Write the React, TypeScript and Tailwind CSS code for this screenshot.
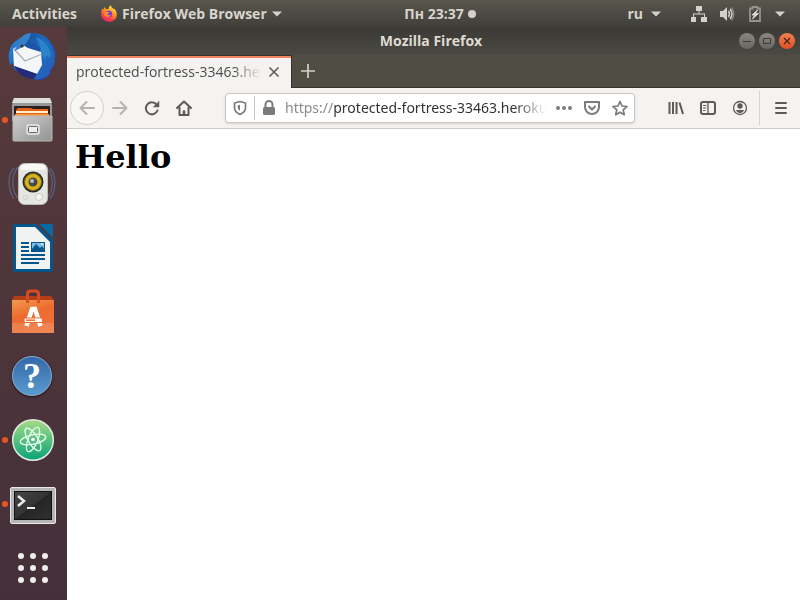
import type { ReactNode } from "react";

function Caret({ className = "" }: { className?: string }) {
  return (
    <svg className={className} width="10" height="6" viewBox="0 0 10 6" fill="#d3d1ca" aria-hidden="true">
      <path d="M0 0.5h10L5 5.5z" />
    </svg>
  );
}

function FirefoxLogo() {
  return (
    <svg width="16" height="17" viewBox="0 0 16 17" aria-hidden="true">
      <defs>
        <linearGradient id="fx" x1="0.8" y1="0" x2="0.3" y2="1">
          <stop offset="0" stopColor="#fff04a" />
          <stop offset="0.4" stopColor="#ff9a26" />
          <stop offset="0.75" stopColor="#ff4140" />
          <stop offset="1" stopColor="#e5207c" />
        </linearGradient>
      </defs>
      <path
        d="M1.3 3.4 2.6 4.6 3.6 2.1 5.2 4.2 7.4 4.1C7.5 2.2 8.7.8 9.8.3c.2 1.9 2 2.6 3.1 4.1l.2-1c2 2 2.7 4.1 2.7 6 0 4.2-3.4 7.3-7.8 7.3S.2 13.5.2 9.2C.2 7 .6 5 1.3 3.4z"
        fill="url(#fx)"
      />
      <circle cx="7.9" cy="9" r="3.3" fill="#7a3bd8" />
      <path d="M3 6.4c1.5-.6 2.5-.1 3.6.5l2 .2c-.3 1.1-1.5 1.2-2 1.6.2 1.5 2.2 2 3.6.9-1 3.4-6.6 3.1-7.4-.8z" fill="#ff8a2a" />
    </svg>
  );
}

function Thunderbird() {
  return (
    <svg width="48" height="48" viewBox="0 0 48 48" aria-hidden="true">
      <defs>
        <linearGradient id="tb" x1="0" y1="0" x2="1" y2="1">
          <stop offset="0" stopColor="#2a8fdc" />
          <stop offset="0.5" stopColor="#1c60ba" />
          <stop offset="1" stopColor="#2b37a0" />
        </linearGradient>
        <linearGradient id="tw" x1="0" y1="0" x2="1" y2="1">
          <stop offset="0" stopColor="#1b4796" />
          <stop offset="0.5" stopColor="#1d6fc0" />
          <stop offset="1" stopColor="#2858b8" />
        </linearGradient>
      </defs>
      <path d="M9 8C1 13-1 24 2 33l3-2 1 6 4 3V37l20 5-4 6c9 1 14-2 17-7l-2-1c4-3 6-8 6-13l-1 2c4-8 0-16-7-23C31 0 20-1 14 5z" fill="url(#tb)" />
      <path d="M13 13c7-4 15-4 20 3 3 8 1 18-5 27l-2 4c11 1 15-4 17-8l-2 1c5-5 7-11 5-19C44 10 34 2 24 1c-6 0-9 3-11 6z" fill="url(#tw)" />
      <path d="M5 17 13 12 33 19 34 33 29 42 6 34z" fill="#f5f6f8" />
      <path d="m6 17 11 12 17-7" stroke="#a9aeb9" strokeWidth="1.3" fill="none" />
      <path d="M13 12c9-4 17-2 20 8L20 16z" fill="#1b55a5" />
      <path d="M9 14C11 6 16 1 23 1l-2 6-5 7-5 3-5 2z" fill="#3580c9" />
      <path d="M28 5c8 3 13 9 15 18l-2 3-2-3-2 4-3-4c-1-7-3-12-6-18z" fill="#2b83c9" />
      <path d="M6 34 29 42 25 47C16 46 10 42 6 34z" fill="#232c7c" />
      <circle cx="14" cy="14" r="1.6" fill="#3a322f" />
    </svg>
  );
}

function Files() {
  return (
    <svg width="48" height="48" viewBox="0 0 48 48" aria-hidden="true">
      <defs>
        <linearGradient id="fi" x1="0" y1="0" x2="1" y2="1">
          <stop offset="0" stopColor="#cecece" />
          <stop offset="1" stopColor="#929292" />
        </linearGradient>
      </defs>
      <path d="M6 2h36l2 7v16H4V9z" fill="#989898" />
      <path d="M6 2h36l2 5H4z" fill="#dedede" />
      <rect x="6" y="10" width="36" height="10" rx="1" fill="#28211f" />
      <path d="M8 14l2-2h13l2 1h15v7H8z" fill="#e56018" />
      <path d="M8 15h32v2H8z" fill="#fff0c8" />
      <path d="M7 18h34v3H7z" fill="#f3983e" />
      <path d="M5 20h39v24q0 1-1 1H6q-1 0-1-1z" fill="url(#fi)" stroke="#b9b9b9" />
      <rect x="18" y="28" width="14" height="11" rx="3" fill="#d9d9d9" />
      <rect x="20.5" y="30.5" width="9" height="6" rx="1" fill="#eee" stroke="#666" />
    </svg>
  );
}

function Rhythmbox() {
  return (
    <svg width="48" height="48" viewBox="0 0 48 48" aria-hidden="true">
      <g fill="none" stroke="#61739d" strokeWidth="1.3" opacity="0.65">
        <path d="M6 8C-1 16 0 30 6 39M10 7C3 16 3 30 10 38M42 8c7 8 6 23 0 31M39 8c7 8 7 22 0 30" />
      </g>
      <rect x="10.5" y="3.5" width="29" height="41" rx="6" fill="#e5e5e2" stroke="#bbb" />
      <path d="M13 5q12-3 24 0v5H13z" fill="#fff" opacity="0.7" />
      <circle cx="25" cy="22" r="10.5" fill="#292a28" />
      <circle cx="25" cy="22" r="8.5" fill="#d9b319" stroke="#78651b" />
      <circle cx="25" cy="22" r="4.5" fill="#48494a" />
      <circle cx="24" cy="21" r="2" fill="#b9bcc2" />
      <circle cx="31" cy="37" r="3.5" fill="#f5f5f5" stroke="#c7c7c5" />
      <rect x="15.5" y="35.5" width="4" height="4" rx="1" fill="none" stroke="#d0d0ce" />
    </svg>
  );
}

function Writer() {
  return (
    <svg width="48" height="48" viewBox="0 0 48 48" aria-hidden="true">
      <path d="M7 0h21l17 16v29q0 3-3 3H7q-2 0-2-3V2q0-2 2-2z" fill="#07568b" />
      <path d="M31 0h12q2 0 2 2v12z" fill="#0869a3" />
      <path d="M8 3h19l15 15v27H8z" fill="#f1f2f2" />
      <path d="M13 19h8M13 23h8M13 27h8M13 31h24M13 35h24M13 39h18" stroke="#07568b" strokeWidth="2" />
      <rect x="23" y="18" width="14" height="10" fill="#07568b" />
      <path d="M24 19h12v6l-2-3-2 2-4-4-4 5z" fill="#78bde5" />
      <circle cx="34" cy="20" r="1" fill="#fff5a8" />
    </svg>
  );
}

function Software() {
  return (
    <svg width="48" height="48" viewBox="0 0 48 48" aria-hidden="true">
      <defs>
        <linearGradient id="sw" x1="0" y1="0" x2="0.4" y2="1">
          <stop offset="0" stopColor="#f09a50" />
          <stop offset="0.5" stopColor="#ed6a2f" />
          <stop offset="1" stopColor="#ee733b" />
        </linearGradient>
      </defs>
      <path d="M6 8h37l3 4H4z" fill="#b33e17" />
      <path d="M4 12h42v33H4z" fill="url(#sw)" />
      <path d="M4 35h42v10H4z" fill="#fff" opacity="0.12" />
      <path d="M19.5 15V6q0-3 3-3h5q3 0 3 3v9" fill="none" stroke="#d84d20" strokeWidth="3" />
      <path d="m18.5 38 5.500-17h3l5.500 17" fill="none" stroke="#fff" strokeWidth="4.5" />
      <rect x="15" y="29.5" width="20" height="5.5" rx="1.5" fill="#ed6a2f" />
      <rect x="16.5" y="30.5" width="17.5" height="3.5" rx="1" fill="#fff" />
      <path d="M18 32.200h9" stroke="#ed6a2f" strokeWidth="1.500" />
    </svg>
  );
}

function Help() {
  return (
    <span className="flex size-10 items-center justify-center rounded-full border border-[#87aed8] bg-linear-to-b from-[#3568aa] to-[#5a9bcd] font-['Liberation_Serif',serif] text-[36px] leading-none font-bold text-white shadow-[0_1px_2px_#211]">
      ?
    </span>
  );
}

function Atom() {
  return (
    <svg width="48" height="48" viewBox="0 0 48 48" aria-hidden="true">
      <defs>
        <linearGradient id="at" x1="0" y1="0" x2="0" y2="1">
          <stop offset="0" stopColor="#a8db87" />
          <stop offset="1" stopColor="#07a477" />
        </linearGradient>
      </defs>
      <circle cx="25" cy="24" r="20.3" fill="url(#at)" stroke="#e4e9e4" strokeWidth="1.5" />
      <g fill="none" stroke="#e6fff1" strokeWidth="1.3" strokeLinecap="round" strokeDasharray="58 6">
        <ellipse cx="25" cy="23.5" rx="13" ry="4.8" transform="rotate(-12 25 23.5)" />
        <ellipse cx="25" cy="23.5" rx="13" ry="4.8" transform="rotate(58 25 23.5)" />
        <ellipse cx="25" cy="23.5" rx="13" ry="4.8" transform="rotate(112 25 23.5)" />
      </g>
      <circle cx="25" cy="23.5" r="1.8" fill="#fff" />
    </svg>
  );
}

function Terminal() {
  return (
    <svg width="48" height="48" viewBox="0 0 48 48" aria-hidden="true">
      <defs>
        <linearGradient id="te" x1="0" y1="0" x2="1" y2="1">
          <stop offset="0" stopColor="#464646" />
          <stop offset="0.5" stopColor="#333" />
          <stop offset="0.5" stopColor="#252525" />
          <stop offset="1" stopColor="#303030" />
        </linearGradient>
      </defs>
      <rect x="2.5" y="7.5" width="45" height="36" rx="1.5" fill="#b5b5b5" stroke="#e8e8e8" />
      <rect x="6.5" y="11.5" width="37" height="28" fill="url(#te)" stroke="#111" />
      <path d="m10 16 6 5-6 5" fill="none" stroke="#eee" strokeWidth="2.5" />
      <path d="M19 28h8" stroke="#eee" strokeWidth="2" />
    </svg>
  );
}

function AppGrid() {
  return (
    <svg width="48" height="48" viewBox="0 0 48 48" fill="#eeeeec" aria-hidden="true">
      {[12, 24, 36].map((y) => [13, 25, 37].map((x) => <circle key={`${x}-${y}`} cx={x} cy={y} r="3" />))}
    </svg>
  );
}

const dockItems: { name: string; icon: ReactNode; running?: boolean }[] = [
  { name: "Thunderbird Mail", icon: <Thunderbird /> },
  { name: "Files", icon: <Files />, running: true },
  { name: "Rhythmbox", icon: <Rhythmbox /> },
  { name: "LibreOffice Writer", icon: <Writer /> },
  { name: "Ubuntu Software", icon: <Software /> },
  { name: "Help", icon: <Help /> },
  { name: "Atom", icon: <Atom />, running: true },
  { name: "Terminal", icon: <Terminal />, running: true },
  { name: "Show Applications", icon: <AppGrid /> },
];

function TopBar() {
  return (
    <header className="grid h-[27px] grid-cols-[1fr_auto_1fr] items-center bg-linear-to-b from-[#59564e] to-[#403f3a] px-3 text-[14px] leading-5 font-bold text-[#d8d5cd]">
      <div className="flex items-center gap-6">
        <button>Activities</button>
        <button className="flex items-center gap-[5px]">
          <FirefoxLogo />
          <span>Firefox Web Browser</span>
          <Caret />
        </button>
      </div>
      <button className="flex items-center gap-1 pl-20">
        <span>Пн 23:37</span>
        <span className="size-2 rounded-full bg-[#d3d1ca]" />
      </button>
      <div className="flex items-center justify-end gap-[30px] pr-[3px]">
        <button className="flex items-center gap-2">
          ru
          <Caret />
        </button>
        <button aria-label="System menu" className="flex items-center gap-3">
          <svg width="16" height="16" viewBox="0 0 16 16" fill="#d3d1ca" aria-hidden="true">
            <path d="M5 0h6v5H8.5v2.5H14V11h2v5h-6v-5h3V8.5H3V11h2v5H0v-5h2V7.5h5.5V5H5z" />
          </svg>
          <svg width="16" height="16" viewBox="0 0 16 16" aria-hidden="true">
            <path d="M1 5h3l4-4v14l-4-4H1z" fill="#d3d1ca" />
            <path d="M9.5 5q2 3 0 6M11 3q4 5 0 10" fill="none" stroke="#d3d1ca" strokeWidth="1.5" />
            <path d="M12.5 1.5q4.5 6.5 0 13" fill="none" stroke="#878580" strokeWidth="1.5" />
          </svg>
          <svg width="16" height="16" viewBox="0 0 16 16" aria-hidden="true">
            <path d="M5.5 2.5V1h5v1.5H13V15H3V2.5z" fill="none" stroke="#96938c" strokeWidth="1.8" />
            <path d="M10.5 4 5 9h2.5L5.500 13l6-5.500H8.500z" fill="#e0ddd5" stroke="#e0ddd5" strokeWidth="0.8" />
          </svg>
          <Caret />
        </button>
      </div>
    </header>
  );
}

function Dock() {
  return (
    <nav aria-label="Dock" className="flex w-[67px] shrink-0 flex-col gap-4 bg-linear-to-b from-[#573a3b] to-[#44303a] pt-[5px]">
      {dockItems.map((item) => (
        <button key={item.name} aria-label={item.name} className="flex h-12 shrink-0 items-center pl-[2px]">
          <span className={item.running ? "size-[6px] rounded-full bg-[#e95420]" : "size-[6px]"} />
          <span className="flex size-12 items-center justify-center">{item.icon}</span>
        </button>
      ))}
    </nav>
  );
}

function TitleBar() {
  return (
    <div className="grid h-7 grid-cols-[1fr_auto_1fr] items-center bg-linear-to-b from-[#3a3935] to-[#4b4943] pr-[5px]">
      <h2 className="col-start-2 text-[14px] leading-5 font-bold text-[#dfdbd2]">Mozilla Firefox</h2>
      <div className="flex justify-end gap-1">
        <button aria-label="Minimize" className="flex size-4 items-center justify-center rounded-full bg-linear-to-b from-[#8a8780] to-[#69665f]">
          <svg width="8" height="8" viewBox="0 0 8 8" stroke="#3c3b37"><path d="M0 4.5h8" /></svg>
        </button>
        <button aria-label="Maximize" className="flex size-4 items-center justify-center rounded-full bg-linear-to-b from-[#8a8780] to-[#69665f]">
          <svg width="8" height="8" viewBox="0 0 8 8" fill="none" stroke="#3c3b37"><path d="M.5 1.5h7v5h-7z" /></svg>
        </button>
        <button aria-label="Close window" className="flex size-4 items-center justify-center rounded-full bg-linear-to-b from-[#f47f52] to-[#e04f1e]">
          <svg width="8" height="8" viewBox="0 0 8 8" stroke="#41261c" strokeWidth="1.2"><path d="m1 1 6 6M7 1 1 7" /></svg>
        </button>
      </div>
    </div>
  );
}

function TabStrip() {
  return (
    <div className="flex h-[33px] bg-[#504d45]">
      <div className="flex w-[225px] items-center gap-1 border-t border-r border-[#35342f] bg-[#f4f3f2] px-[9px] shadow-[inset_0_2px_0_#f4845b]">
        <button className="min-w-0 flex-1 overflow-hidden mask-[linear-gradient(to_right,#000_84%,transparent)] text-left text-[14px] leading-5 whitespace-nowrap text-[#4c4c4c]">
          protected-fortress-33463.herokuapp.com/
        </button>
        <button aria-label="Close tab" className="flex size-4 shrink-0 items-center justify-center">
          <svg width="12" height="12" viewBox="0 0 12 12" stroke="#5c5c5a" strokeWidth="1.6"><path d="m1.5 1.5 9 9M10.5 1.5l-9 9" /></svg>
        </button>
      </div>
      <div className="flex flex-1 items-center border-b border-[#35342f] pl-2">
        <button aria-label="New tab" className="p-[1px]">
          <svg width="14" height="14" viewBox="0 0 14 14" stroke="#d3d0c8" strokeWidth="1.7"><path d="M7 0v14M0 7h14" /></svg>
        </button>
      </div>
    </div>
  );
}

function Icon({ children, className = "" }: { children: ReactNode; className?: string }) {
  return (
    <svg className={className} width="16" height="16" viewBox="0 0 16 16" fill="none" stroke="currentColor" strokeWidth="2" strokeLinecap="round" strokeLinejoin="round" aria-hidden="true">
      {children}
    </svg>
  );
}

function Toolbar() {
  return (
    <div className="flex h-[41px] items-center border-b border-[#cbc7c3] bg-[#f4f3f2] pr-[11px] pl-[3px] text-[#5c5b59]">
      <div className="flex items-center">
        <button aria-label="Back" className="flex size-[34px] items-center justify-center rounded-full border border-[#d2d0ce] bg-[#f8f7f6] text-[#b5b3b1]">
          <Icon><path d="M15 8H1.5M7.5 2 1.5 8l6 6" /></Icon>
        </button>
        <button aria-label="Forward" className="ml-2 text-[#b5b3b1]">
          <Icon><path d="M1 8h13.5M8.5 2l6 6-6 6" /></Icon>
        </button>
        <button aria-label="Reload" className="ml-4">
          <Icon><path d="M13.5 10.5A6 6 0 1 1 12.5 4.5" /><path d="M15 1.5V7H9.5z" fill="currentColor" strokeWidth="0.5" /></Icon>
        </button>
        <button aria-label="Home" className="ml-4">
          <Icon><path d="m1 8 7-6.500L15 8M3.5 7.5V15h9V7.5" /><path d="M7.5 14v-3h1v3" strokeWidth="1.5" /></Icon>
        </button>
      </div>
      <div className="ml-[33px] flex h-[30px] min-w-0 flex-1 items-center rounded-[4px] border border-[#cbc7c3] bg-white px-[6px] text-[#7b7b7a] shadow-sm">
        <button aria-label="Tracking protection">
          <Icon><path d="M8 1.5 13.5 3v4.500c0 3.500-2 5.500-5.500 7-3.500-1.500-5.500-3.500-5.500-7V3z" strokeWidth="1.7" /><path d="M8 4.8v6C6.200 9.800 5.700 8.500 5.700 7V5.500z" fill="currentColor" stroke="none" /></Icon>
        </button>
        <span className="mx-[6px] h-6 w-px bg-[#cbc9c7]" />
        <button aria-label="Site information">
          <svg width="16" height="16" viewBox="0 0 16 16" aria-hidden="true">
            <path d="M4.5 7V4.500a3.500 3.500 0 0 1 7 0V7" fill="none" stroke="currentColor" strokeWidth="2" />
            <rect x="2" y="7" width="12" height="8" rx="1.5" fill="currentColor" />
          </svg>
        </button>
        <label className="ml-2 flex min-w-0 flex-1 overflow-hidden mask-[linear-gradient(to_right,#000_88%,transparent)] font-['Noto_Sans',sans-serif] text-[14px] leading-5">
          <span className="text-[#8b8b8a]">https://</span>
          <input aria-label="Address" className="min-w-0 flex-1 bg-transparent text-[#333] outline-none" defaultValue="protected-fortress-33463.herokuapp.com" />
        </label>
        <div className="ml-2 flex items-center gap-3">
          <button aria-label="Page actions">
            <svg width="18" height="16" viewBox="0 0 18 16" fill="currentColor" aria-hidden="true"><circle cx="4" cy="8" r="2" /><circle cx="10" cy="8" r="2" /><circle cx="16" cy="8" r="2" /></svg>
          </button>
          <button aria-label="Save to Pocket">
            <Icon><path d="M1 2h14v5a7 7 0 0 1-14 0z" /><path d="m5 6.500 3 3 3-3" /></Icon>
          </button>
          <button aria-label="Bookmark this page">
            <Icon><path d="m8 1.500 2 4.500 5 .5-3.800 3.300 1.100 4.900L8 12.200l-4.300 2.500 1.100-4.900L1 6.500 6 6z" strokeWidth="1.7" /></Icon>
          </button>
        </div>
      </div>
      <div className="ml-[33px] flex items-center">
        <button aria-label="Library"><Icon><path d="M1.5 2v12M5 2v12M8.5 2v12M11.5 2.500 15 14" strokeLinecap="butt" /></Icon></button>
        <button aria-label="Sidebars" className="ml-4"><Icon><rect x="1" y="2" width="14" height="12" rx="2" /><path d="M8 2.500v11" strokeWidth="1.3" /><path d="M3.500 5.500h2.500M3.500 8h2.500M3.500 10.500h1.500" strokeWidth="1" /></Icon></button>
        <button aria-label="Account" className="ml-4"><Icon><circle cx="8" cy="8" r="6.5" strokeWidth="1.3" /><circle cx="8" cy="6" r="2.7" fill="currentColor" stroke="none" /><path d="M4 10h8q-1 3-4 3t-4-3z" fill="currentColor" stroke="none" /></Icon></button>
        <span className="ml-[11px] h-[34px] w-px bg-[#d6d4d2]" />
        <button aria-label="Menu" className="ml-[13px]"><Icon><path d="M3 3h10M3 8h10M3 13h10" /></Icon></button>
      </div>
    </div>
  );
}

export default function App() {
  return (
    <div className="flex min-h-screen flex-col bg-white font-['Open_Sans','Noto_Sans',sans-serif]">
      <TopBar />
      <div className="flex flex-1">
        <Dock />
        <section className="flex min-w-0 flex-1 flex-col">
          <TitleBar />
          <TabStrip />
          <Toolbar />
          <main className="flex-1 bg-white px-2 py-[9px]">
            <h1 className="font-['DejaVu_Serif',serif] text-[32px] leading-[38px] font-bold text-black">Hello</h1>
          </main>
        </section>
      </div>
    </div>
  );
}
